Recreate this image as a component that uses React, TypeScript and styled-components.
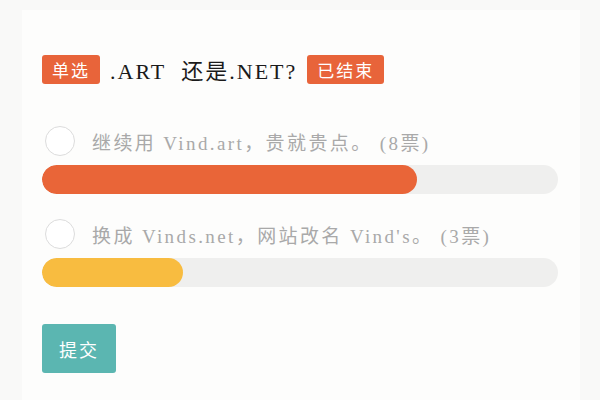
import React from "react";
import styled, { createGlobalStyle } from "styled-components";

const Global = createGlobalStyle`
  html, body { margin: 0; padding: 0; background: #f9f9f8; }
  body { width: 600px; height: 400px; overflow: hidden; }
`;

const serif = `"Liberation Serif", "Noto Sans CJK SC", serif`;

const Page = styled.div`
  width: 600px;
  height: 400px;
  box-sizing: border-box;
  padding: 10px 20px 0 22px;
  background: #f9f9f8;
`;

const Card = styled.div`
  height: 390px;
  box-sizing: border-box;
  padding: 44px 22px 0 20px;
  background: #fdfdfc;
  display: flex;
  flex-direction: column;
`;

const TitleRow = styled.div`
  display: flex;
  align-items: center;
  gap: 10px;
  height: 30px;
`;

const Tag = styled.span`
  display: inline-flex;
  align-items: center;
  justify-content: center;
  height: 29px;
  padding: 0 10px;
  background: #e8643a;
  color: #fff;
  border-radius: 3px;
  font-family: ${serif};
  font-size: 17px;
  letter-spacing: 2px;
`;

const Title = styled.span`
  font-family: ${serif};
  font-size: 22px;
  color: #1a1a1a;
  letter-spacing: 2px;
  word-spacing: 8px;
`;

const Option = styled.div<{ $first?: boolean }>`
  margin-top: ${(p) => (p.$first ? "41px" : "24px")};
  display: flex;
  flex-direction: column;
  gap: 8px;
`;

const OptionLabel = styled.div`
  display: flex;
  align-items: center;
  gap: 17px;
  height: 32px;
  padding-left: 3px;
`;

const Radio = styled.span`
  width: 30px;
  height: 30px;
  box-sizing: border-box;
  border-radius: 50%;
  border: 1px solid #dcdcdc;
  background: #fff;
  flex: none;
`;

const OptionText = styled.span`
  font-family: ${serif};
  font-size: 19px;
  color: #a9a9a9;
  letter-spacing: 2.4px;
`;

const Track = styled.div`
  height: 29px;
  border-radius: 15px;
  background: #efefee;
  overflow: hidden;
`;

const Fill = styled.div<{ $color: string }>`
  height: 100%;
  border-radius: 15px;
  background: ${(p) => p.$color};
`;

const Submit = styled.button`
  margin-top: 37px;
  align-self: flex-start;
  width: 74px;
  height: 49px;
  border: none;
  border-radius: 3px;
  background: #5bb6b1;
  color: #fff;
  font-family: ${serif};
  font-size: 18px;
  letter-spacing: 2px;
  padding: 0;
`;

const options = [
  { text: "继续用 Vind.art，贵就贵点。 (8票)", votes: 8, color: "#e96538" },
  { text: "换成 Vinds.net，网站改名 Vind's。 (3票)", votes: 3, color: "#f8bc40" },
];

export default function App() {
  const total = options.reduce((s, o) => s + o.votes, 0);
  return (
    <>
      <Global />
      <Page>
        <Card>
          <TitleRow>
            <Tag>单选</Tag>
            <Title>.ART 还是.NET?</Title>
            <Tag>已结束</Tag>
          </TitleRow>
          {options.map((o, i) => (
            <Option key={i} $first={i === 0}>
              <OptionLabel>
                <Radio />
                <OptionText>{o.text}</OptionText>
              </OptionLabel>
              <Track>
                <Fill $color={o.color} style={{ width: `${(o.votes / total) * 100}%` }} />
              </Track>
            </Option>
          ))}
          <Submit>提交</Submit>
        </Card>
      </Page>
    </>
  );
}
